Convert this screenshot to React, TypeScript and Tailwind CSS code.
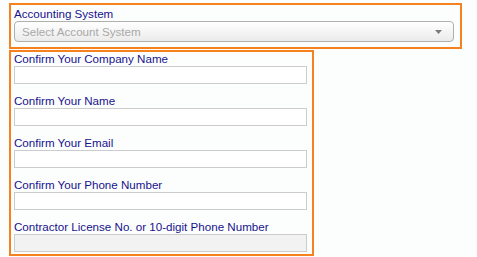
import React from "react";

const labels = [
  "Confirm Your Company Name",
  "Confirm Your Name",
  "Confirm Your Email",
  "Confirm Your Phone Number",
];

export default function App() {
  return (
    <div
      className="w-[477px] h-[257px] bg-[#fcfefe] pt-[3px] pl-[9px] text-[11.6px] leading-[14px]"
      style={{ fontFamily: '"Liberation Sans", Arial, sans-serif' }}
    >
      <div className="w-[453px] h-[46px] border-2 border-[#f5821f] pt-[2px] pl-[3px] pr-[4px] flex flex-col">
        <div className="text-[#17128c] h-[14px]">Accounting System</div>
        <div className="h-[21px] w-[440px] rounded-[4px] border border-[#b0b0b0] bg-gradient-to-b from-white to-[#ebebeb] flex items-center justify-between pl-[7px] pr-[11px]">
          <span className="text-[#a8a8a8]">Select Account System</span>
          <svg width="7" height="4" viewBox="0 0 7 4">
            <path d="M0 0 L7 0 L3.5 4 Z" fill="#7a7a7a" />
          </svg>
        </div>
      </div>
      <div className="mt-[1px] w-[305px] h-[206px] border-2 border-[#f5821f] pl-[3px] flex flex-col">
        {labels.map((l) => (
          <div key={l} className="flex flex-col mb-[10px]">
            <div className="text-[#17128c] h-[14px]">{l}</div>
            <div className="w-[293px] h-[18px] border border-[#cccccc] bg-white" />
          </div>
        ))}
        <div className="flex flex-col">
          <div className="text-[#17128c] h-[14px]">
            Contractor License No. or 10-digit Phone Number
          </div>
          <div className="w-[293px] h-[18px] border border-[#cccccc] bg-[#f2f2f2]" />
        </div>
      </div>
    </div>
  );
}
